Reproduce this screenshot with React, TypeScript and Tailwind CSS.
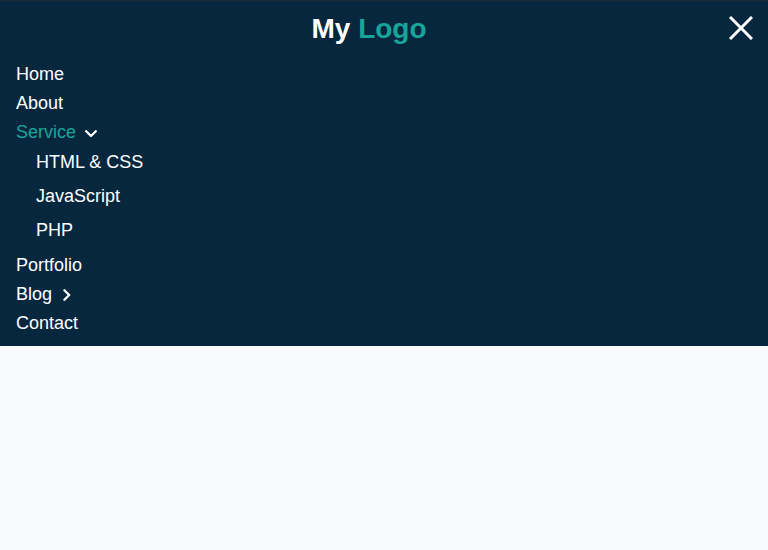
import React from "react";

const rowClass = "flex h-[29px] items-center";

export default function App() {
  return (
    <div className="h-[550px] overflow-hidden bg-[#f8fafe] font-['Liberation_Sans',Arial,sans-serif] text-[18px] text-white">
      <header className="h-[346px] border-t border-[#20282f] bg-[#07273f]">
        <div className="flex h-[59px] items-start justify-between pr-[15px]">
          <div className="w-[24px]" />
          <h1 className="ml-[-15px] pt-[7px] text-[28px] leading-[42px] font-bold">
            My <span className="text-[#18a599]">Logo</span>
          </h1>
          <button aria-label="Close menu" className="mt-[15px]">
            <svg width="24" height="24" viewBox="0 0 24 24" fill="none" stroke="currentColor" strokeWidth="3">
              <path d="M1 1L23 23M23 1L1 23" />
            </svg>
          </button>
        </div>
        <nav className="px-4">
          <a className={rowClass}>Home</a>
          <a className={rowClass}>About</a>
          <a className={rowClass}>
            <span className="text-[#18a599]">Service</span>
            <svg className="mt-[3px] ml-[9px]" width="12" height="8" viewBox="0 0 12 8" fill="none" stroke="currentColor" strokeWidth="2.3" strokeLinecap="round" strokeLinejoin="round">
              <path d="M1.2 1.2L6 6L10.8 1.2" />
            </svg>
          </a>
          <div className="-mt-[2px] mb-[4px] pl-5">
            <a className="flex h-[34px] items-center">HTML &amp; CSS</a>
            <a className="flex h-[34px] items-center">JavaScript</a>
            <a className="flex h-[34px] items-center">PHP</a>
          </div>
          <a className={rowClass}>Portfolio</a>
          <a className={rowClass}>
            <span>Blog</span>
            <svg className="mt-[1px] ml-[11px]" width="9" height="12" viewBox="0 0 9 12" fill="none" stroke="currentColor" strokeWidth="2.3" strokeLinecap="round" strokeLinejoin="round">
              <path d="M1.4 1.2L6.2 6L1.4 10.8" />
            </svg>
          </a>
          <a className={rowClass}>Contact</a>
        </nav>
      </header>
    </div>
  );
}
